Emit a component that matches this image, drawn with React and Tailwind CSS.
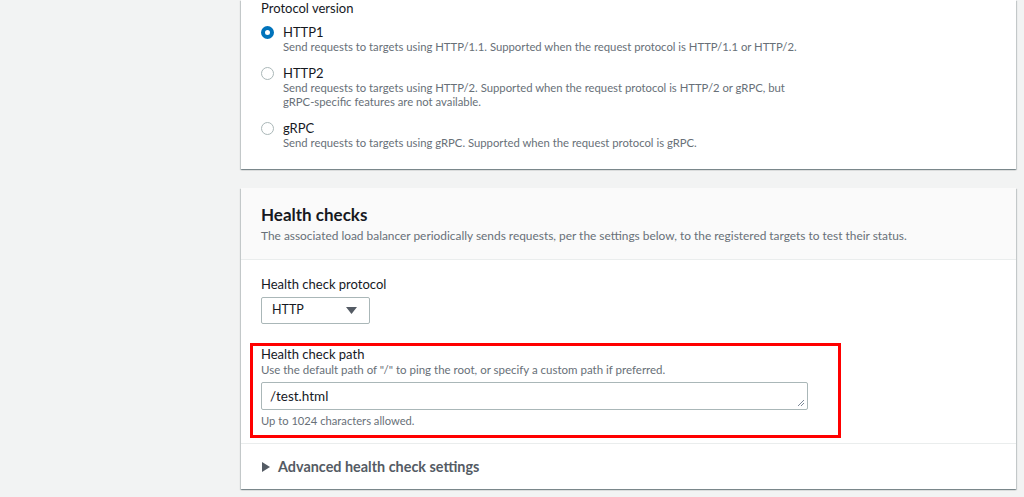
export default function App() {
  const font = { fontFamily: "Lato, 'Liberation Sans', sans-serif" };

  const options = [
    {
      id: "http1",
      label: "HTTP1",
      desc: ["Send requests to targets using HTTP/1.1. Supported when the request protocol is HTTP/1.1 or HTTP/2."],
      checked: true,
    },
    {
      id: "http2",
      label: "HTTP2",
      desc: [
        "Send requests to targets using HTTP/2. Supported when the request protocol is HTTP/2 or gRPC, but",
        "gRPC-specific features are not available.",
      ],
    },
    {
      id: "grpc",
      label: "gRPC",
      desc: ["Send requests to targets using gRPC. Supported when the request protocol is gRPC."],
    },
  ];

  return (
    <div className="min-h-[497px] bg-[#f2f3f3] text-[#16191f]" style={font}>
      <div className="ml-[241px] w-[775px]">
        {/* Protocol version card */}
        <div className="bg-white shadow-[0_1px_1px_0_rgba(0,28,36,0.3),1px_1px_1px_0_rgba(0,28,36,0.15),-1px_1px_1px_0_rgba(0,28,36,0.15)] px-5 pb-[19px]">
          <div className="text-[13px] leading-4">Protocol version</div>
          <div className="mt-[8px] flex flex-col gap-[11px]">
            {options.map((o) => (
              <div key={o.id} className="flex">
                <div className="w-[22px] shrink-0 pt-[2px]">
                  {o.checked ? (
                    <div className="h-[13px] w-[13px] rounded-full border-[4px] border-[#0073bb] bg-white" />
                  ) : (
                    <div className="h-[13px] w-[13px] rounded-full border-[1.5px] border-[#aab7b8] bg-white" />
                  )}
                </div>
                <div>
                  <div className="text-[13px] leading-4">{o.label}</div>
                  <div className="text-[11.3px] leading-[14px] text-[#687078]">
                    {o.desc.map((d) => (
                      <div key={d}>{d}</div>
                    ))}
                  </div>
                </div>
              </div>
            ))}
          </div>
        </div>

        {/* Health checks card */}
        <div className="mt-[19px] bg-white shadow-[0_1px_1px_0_rgba(0,28,36,0.3),1px_1px_1px_0_rgba(0,28,36,0.15),-1px_1px_1px_0_rgba(0,28,36,0.15)]">
          <div className="bg-[#fafafa] border-b border-[#eaeded] px-5 pt-[17px] pb-[16px]">
            <h2 className="text-[17px] font-bold leading-5">Health checks</h2>
            <p className="mt-[4px] text-[11.9px] leading-[14px] text-[#687078]">
              The associated load balancer periodically sends requests, per the settings below, to the registered targets to test their status.
            </p>
          </div>

          <div className="px-5 pt-4 pb-[5px]">
            <div className="text-[13px] leading-4">Health check protocol</div>
            <div className="mt-[5px] flex h-[27px] w-[109px] items-center justify-between rounded-[2px] border border-[#aab7b8] pl-[10px] pr-[12px] text-[12.5px]">
              <span>HTTP</span>
              <svg width="11" height="8" viewBox="0 0 11 8">
                <path d="M0 0 L11 0 L5.5 7 Z" fill="#545b64" />
              </svg>
            </div>

            {/* highlighted field */}
            <div className="mt-[19px] -ml-[11px] w-[591px] border-[3px] border-[#ff0000] pl-[8px] pb-[7px]">
              <div className="text-[13px] leading-4">Health check path</div>
              <div className="mt-[1px] text-[11.5px] leading-[14px] text-[#687078]">
                Use the default path of "/" to ping the root, or specify a custom path if preferred.
              </div>
              <div className="relative mt-[5px] flex h-[28px] w-[547px] items-center rounded-[2px] border border-[#aab7b8] px-[8px] text-[13.5px]">
                /test.html
                <svg className="absolute bottom-[2px] right-[2px]" width="8" height="8" viewBox="0 0 8 8">
                  <path d="M7 1 L1 7 M7 4 L4 7" stroke="#7d8998" strokeWidth="1" />
                </svg>
              </div>
              <div className="mt-[4px] text-[11.2px] leading-[14px] text-[#687078]">Up to 1024 characters allowed.</div>
            </div>
          </div>

          <div className="flex h-[46px] items-center border-t border-[#eaeded] px-5">
            <svg width="8" height="10" viewBox="0 0 8 10" className="ml-[1px]">
              <path d="M0 0 L8 5 L0 10 Z" fill="#545b64" />
            </svg>
            <span className="ml-[8px] text-[14.4px] font-bold text-[#545b64]">Advanced health check settings</span>
          </div>
        </div>
      </div>
    </div>
  );
}
